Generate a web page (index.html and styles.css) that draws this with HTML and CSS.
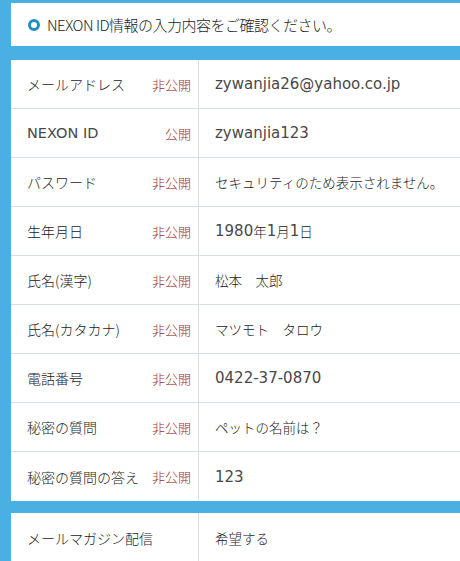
FILE: index.html
```html
<!DOCTYPE html>
<html lang="ja">
<head>
    <meta charset="UTF-8">
    <title>NEXON ID 確認</title>
    <link rel="stylesheet" href="styles.css">
</head>
<body>
    <div class="page">
        <div class="header">
            <span class="ring"></span>
            <span class="header-text">NEXON ID情報の入力内容をご確認ください。</span>
        </div>

        <div class="table">
            <div class="row">
                <div class="label"><span>メールアドレス</span><span class="badge">非公開</span></div>
                <div class="value"><span class="en">zywanjia26@yahoo.co.jp</span></div>
            </div>
            <div class="row">
                <div class="label"><span class="en-label">NEXON ID</span><span class="badge">公開</span></div>
                <div class="value"><span class="en">zywanjia123</span></div>
            </div>
            <div class="row">
                <div class="label"><span>パスワード</span><span class="badge">非公開</span></div>
                <div class="value">セキュリティのため表示されません。</div>
            </div>
            <div class="row">
                <div class="label"><span>生年月日</span><span class="badge">非公開</span></div>
                <div class="value"><span class="en">1980</span>年<span class="en">1</span>月<span class="en">1</span>日</div>
            </div>
            <div class="row">
                <div class="label"><span>氏名(漢字)</span><span class="badge">非公開</span></div>
                <div class="value">松本　太郎</div>
            </div>
            <div class="row">
                <div class="label"><span>氏名(カタカナ)</span><span class="badge">非公開</span></div>
                <div class="value">マツモト　タロウ</div>
            </div>
            <div class="row">
                <div class="label"><span>電話番号</span><span class="badge">非公開</span></div>
                <div class="value"><span class="en">0422-37-0870</span></div>
            </div>
            <div class="row">
                <div class="label"><span>秘密の質問</span><span class="badge">非公開</span></div>
                <div class="value">ペットの名前は？</div>
            </div>
            <div class="row">
                <div class="label"><span>秘密の質問の答え</span><span class="badge">非公開</span></div>
                <div class="value"><span class="en">123</span></div>
            </div>
        </div>

        <div class="table second">
            <div class="row">
                <div class="label"><span>メールマガジン配信</span></div>
                <div class="value">希望する</div>
            </div>
        </div>
    </div>
</body>
</html>
```

FILE: styles.css
```css
* {
    margin: 0;
    padding: 0;
    box-sizing: border-box;
}

body {
    background-color: #4aafe2;
    font-family: "Noto Sans CJK JP", sans-serif;
    color: #333;
    height: 561px;
    overflow: hidden;
}

.page {
    padding: 3px 0 0 11px;
}

.header {
    background: #fff;
    height: 43px;
    display: flex;
    align-items: center;
    padding-left: 17px;
    gap: 7px;
}

.ring {
    width: 12px;
    height: 12px;
    border: 3px solid #1f8fc4;
    border-radius: 50%;
}

.header-text {
    font-size: 15px;
    font-weight: 300;
    letter-spacing: -0.5px;
    color: #222;
}

.table {
    background: #fff;
    margin-top: 14px;
}

.table.second {
    margin-top: 12px;
}

.row {
    display: grid;
    grid-template-columns: 188px 1fr;
    height: 49px;
    border-bottom: 1px solid #d3e1e6;
}

.row:last-child {
    border-bottom: none;
}

.label {
    display: flex;
    align-items: center;
    justify-content: space-between;
    padding: 0 7px 0 16px;
    border-right: 1px solid #d3e1e6;
    font-size: 14px;
    font-weight: 300;
    color: #222;
}

.en-label {
    font-family: "DejaVu Sans", sans-serif;
    font-size: 14.5px;
    font-weight: normal;
    color: #484848;
}

.badge {
    font-size: 13px;
    font-weight: 300;
    color: #9c2f2f;
}

.value {
    display: flex;
    align-items: center;
    padding-left: 16px;
    font-size: 13.5px;
    font-weight: 300;
    color: #222;
}

.en {
    font-family: "DejaVu Sans", sans-serif;
    font-size: 15px;
    font-weight: normal;
    color: #484848;
}
```
